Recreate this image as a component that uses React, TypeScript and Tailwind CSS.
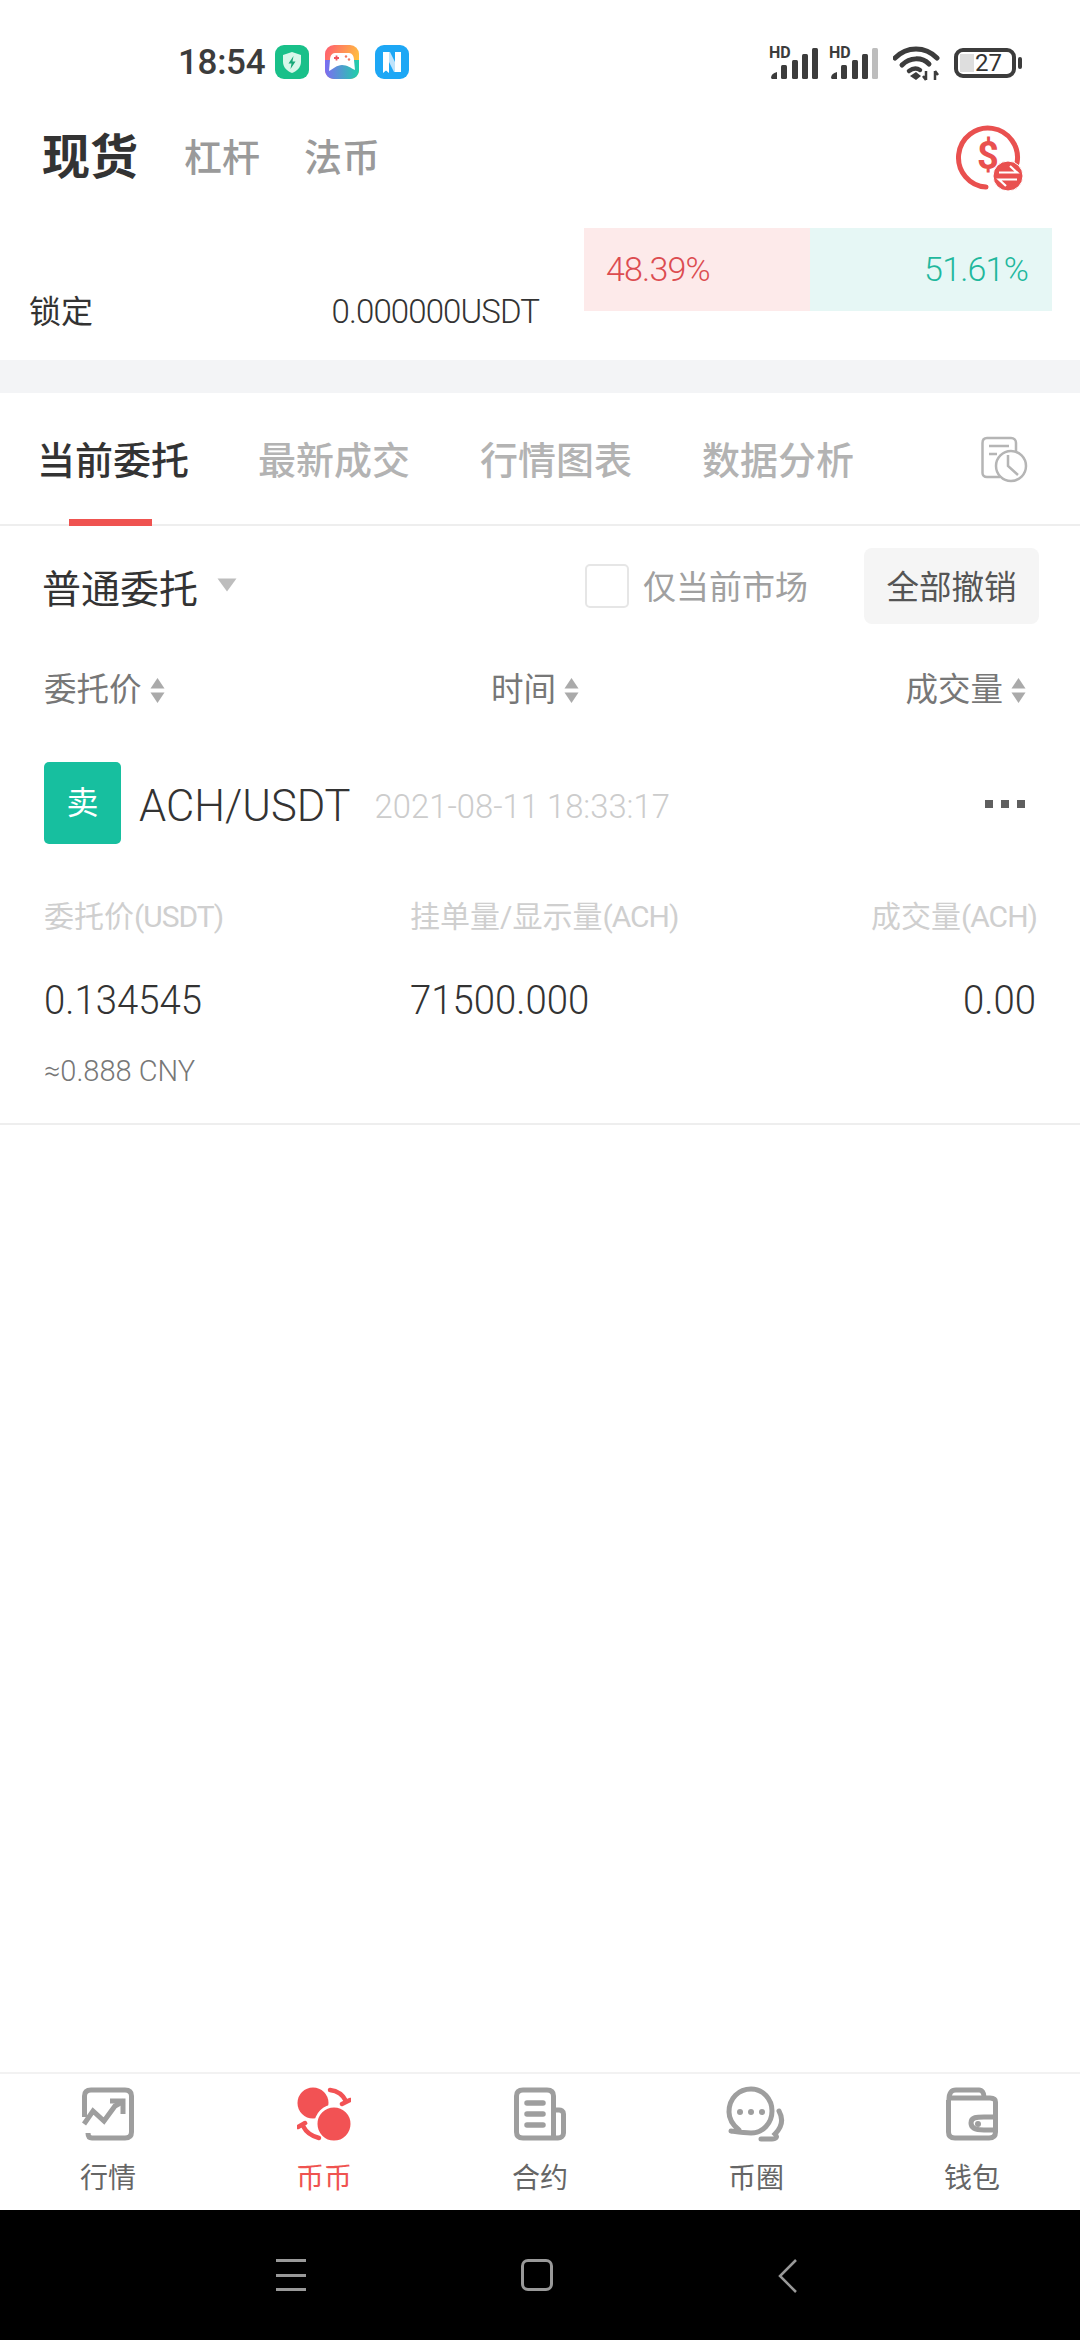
import React from "react";

const Signal = ({ lastGray }: { lastGray?: boolean }) => (
  <svg width="52" height="38" viewBox="0 -4 52 38" className="-mt-[5px]">
    <text x="0" y="12" fontSize="16" fontWeight="700" fill="#3c3c3c" fontFamily="Roboto">HD</text>
    <path d="M2 32C2 29 4 27 8 26V33H3Z" fill="#3c3c3c" />
    <rect x="12" y="19" width="6" height="14" rx="1.500" fill="#3c3c3c" />
    <rect x="23" y="14" width="6" height="19" rx="1.500" fill="#3c3c3c" />
    <rect x="33" y="8" width="6" height="25" rx="1.500" fill="#3c3c3c" />
    <rect x="43" y="2" width="6" height="31" rx="1.500" fill={lastGray ? "#bdbdbd" : "#3c3c3c"} />
  </svg>
);

const Wifi = () => (
  <svg width="48" height="36" viewBox="0 0 48 36" fill="none">
    <path d="M2 13C14 1 32 1 44 13" stroke="#3c3c3c" strokeWidth="5" strokeLinecap="round" />
    <path d="M9 20C17 12 29 12 36 19" stroke="#3c3c3c" strokeWidth="5" strokeLinecap="round" />
    <path d="M16 26C20 23 24 23 27 25" stroke="#3c3c3c" strokeWidth="4.500" strokeLinecap="round" />
    <path d="M17 31L23 27L28 31L23 35Z" fill="#3c3c3c" />
    <path d="M33 26V35M33 35L30 31M42 35V26M42 26L45 30" stroke="#3c3c3c" strokeWidth="2.500" />
  </svg>
);

const Battery = () => (
  <div className="flex items-center gap-[2px]">
    <div className="w-[62px] h-[30px] border-[4px] border-[#3c3c3c] rounded-[9px] flex items-center pl-[2px]">
      <div className="w-[14px] h-[18px] bg-[#dedede]" />
      <span className="text-[24px] leading-none text-[#333] ml-[1px]">27</span>
    </div>
    <div className="w-[4px] h-[12px] bg-[#3c3c3c] rounded-[2px]" />
  </div>
);

const AppGreen = () => (
  <svg width="34" height="34" viewBox="0 0 34 34">
    <rect width="34" height="34" rx="9" fill="#19c089" />
    <path d="M17 7L26 10V17C26 22 22 26 17 28C12 26 8 22 8 17V10Z" fill="#d9f7ea" />
    <path d="M18.500 11L13.500 18.500H16.500L15.500 24L20.500 16.500H17.500Z" fill="#19a878" />
  </svg>
);

const AppGame = () => (
  <svg width="34" height="34" viewBox="0 0 34 34">
    <defs>
      <linearGradient id="gg" x1="0" y1="0" x2="1" y2="0.4">
        <stop offset="0" stopColor="#ff5a72" />
        <stop offset="1" stopColor="#ffc13d" />
      </linearGradient>
      <linearGradient id="gb" x1="0" y1="0" x2="1" y2="0">
        <stop offset="0" stopColor="#7c6cf2" />
        <stop offset="1" stopColor="#1fd0a8" />
      </linearGradient>
    </defs>
    <rect width="34" height="34" rx="9" fill="url(#gg)" />
    <path d="M0 15H34V25C34 30 30 34 25 34H9C4 34 0 30 0 25Z" fill="url(#gb)" />
    <path d="M10 8H24C27 8 29 11 29 15L30 25C26 23 22 20 17 20C12 20 8 24 4 26L5 15C5 11 7 8 10 8Z" fill="#fff" />
    <path d="M9 13H14M11.500 10.500V15.500" stroke="#f0555f" strokeWidth="1.800" />
    <circle cx="21" cy="11.500" r="1.200" fill="#f0775f" />
    <circle cx="24" cy="14.500" r="1.200" fill="#f0775f" />
  </svg>
);

const AppN = () => (
  <svg width="34" height="34" viewBox="0 0 34 34">
    <rect width="34" height="34" rx="9" fill="#1da7f5" />
    <path d="M9 7H15L25 27H19Z" fill="#bfe3fb" />
    <path d="M8 7H14V28L11 25.500L8 28Z" fill="#fff" />
    <path d="M20 7H26V27H20Z" fill="#fff" />
  </svg>
);

const ExchangeIcon = () => (
  <svg width="72" height="72" viewBox="0 0 72 72" fill="none">
    <path d="M31 65A29.500 29.500 0 1 1 62 41" stroke="#e9504f" strokeWidth="5" strokeLinecap="round" />
    <text x="33" y="47" fontSize="38" fontWeight="700" fill="#e9504f" textAnchor="middle" fontFamily="Roboto">$</text>
    <circle cx="53" cy="54" r="15" fill="#e9504f" stroke="#fff" strokeWidth="1" />
    <path d="M44 50.500H62L55 44M62 57.500H44L51 64" stroke="#fff" strokeWidth="2.200" />
  </svg>
);

const HistoryIcon = () => (
  <svg width="48" height="48" viewBox="0 0 48 48" fill="none" stroke="#b5b5b5" strokeWidth="2.500">
    <path d="M20 42H7C4 42 2.500 40 2.500 38V8C2.500 5 4 3 7 3H31C34 3 36 5 36 8V18" />
    <path d="M9 11H29M9 19H17" />
    <circle cx="31" cy="31" r="15" />
    <path d="M28 20V31L38 40" />
  </svg>
);

const SortCaret = () => (
  <svg width="15" height="27" viewBox="0 0 15 27" className="ml-[8px]">
    <path d="M7.500 1L14.500 11.500H0.500Z" fill="#aaa" />
    <path d="M7.500 26L14.500 15.500H0.500Z" fill="#aaa" />
  </svg>
);

const navGray = "#9e9e9e";

const NavChart = () => (
  <svg width="52" height="54" viewBox="0 0 52 54" fill="none" stroke={navGray} strokeWidth="5">
    <path d="M2.500 30V9C2.500 5 5 3 9 3H43C47 3 49.500 5 49.500 9V45C49.500 49 47 51 43 51H10C7 51 6 49 6 46" />
    <path d="M2 37L11 24L22 34L33 19L42 14" strokeWidth="5" />
    <path d="M28 14H41V27" strokeWidth="5" />
  </svg>
);

const NavCoin = () => (
  <svg width="54" height="54" viewBox="0 0 54 54" fill="none">
    <circle cx="16" cy="16" r="15.500" fill="#f25254" />
    <circle cx="37" cy="37" r="18" fill="#f25254" stroke="#fff" strokeWidth="3" />
    <path d="M33 3C41 4 46 8 49 14" stroke="#f25254" strokeWidth="4.500" strokeLinecap="round" />
    <path d="M53 13L45 17" stroke="#f25254" strokeWidth="4.500" strokeLinecap="round" />
    <path d="M6 39C9 45 14 49 22 51" stroke="#f25254" strokeWidth="4.500" strokeLinecap="round" />
    <path d="M1 40L8 36" stroke="#f25254" strokeWidth="4.500" strokeLinecap="round" />
  </svg>
);

const NavPaper = () => (
  <svg width="52" height="54" viewBox="0 0 52 54" fill="none" stroke={navGray} strokeWidth="5">
    <path d="M40 51H9C5 51 2.500 49 2.500 45V9C2.500 5 5 3 9 3H33C37 3 39.500 5 39.500 9V51H44C47 51 49.500 49 49.500 46V27C49.500 24 47 23 45 23H40" />
    <path d="M13 16H29M13 27H29M13 38H29" strokeWidth="5.500" strokeLinecap="round" />
  </svg>
);

const NavChat = () => (
  <svg width="60" height="56" viewBox="0 0 60 56" fill="none" stroke={navGray} strokeWidth="5" strokeLinecap="round">
    <path d="M13 44C8 40 3 34 3 26C3 12 13 3 25 3C37 3 46 13 46 25C46 37 37 47 25 47C18 47 12 46 5 45" />
    <circle cx="14" cy="26" r="3" fill={navGray} stroke="none" />
    <circle cx="25" cy="26" r="3" fill={navGray} stroke="none" />
    <circle cx="36" cy="26" r="3" fill={navGray} stroke="none" />
    <path d="M53 25C58 34 56 41 49 48C52 51 50 53 46 53H35" />
  </svg>
);

const NavWallet = () => (
  <svg width="52" height="54" viewBox="0 0 52 54" fill="none" stroke={navGray} strokeWidth="5">
    <path d="M2.500 13V45C2.500 49 5 51 9 51H43C47 51 49.500 49 49.500 45V15C49.500 12 47 11 44 11H3" />
    <path d="M3 13C3 6 5 3 10 3H33C36 3 38 6 38 10" />
    <path d="M49 30H38C31 30 25 30 25 36C25 42 31 43 38 43H49" />
    <circle cx="32" cy="37" r="3" fill={navGray} stroke="none" />
  </svg>
);

const navItems = [
  { label: "行情", icon: <NavChart />, active: false },
  { label: "币币", icon: <NavCoin />, active: true },
  { label: "合约", icon: <NavPaper />, active: false },
  { label: "币圈", icon: <NavChat />, active: false },
  { label: "钱包", icon: <NavWallet />, active: false },
];

export default function App() {
  return (
    <div className="w-[1080px] h-[2340px] bg-white flex flex-col overflow-hidden font-['Roboto','Noto_Sans_CJK_SC',sans-serif]">
      {/* Status bar */}
      <div className="h-[100px] shrink-0 pt-[45px] pl-[178px] pr-[58px] flex justify-between items-start">
        <div className="flex items-center h-[34px]">
          <span className="text-[35px] leading-none font-medium text-[#3c3c3c] w-[97px] tracking-[-0.3px]">18:54</span>
          <div className="flex gap-[16px]">
            <AppGreen />
            <AppGame />
            <AppN />
          </div>
        </div>
        <div className="flex items-center gap-[8px]">
          <Signal />
          <Signal lastGray />
          <div className="ml-[4px] mr-[5px]">
            <Wifi />
          </div>
          <Battery />
        </div>
      </div>

      {/* Header */}
      <div className="h-[116px] shrink-0 mb-[12px] flex items-center pl-[42px] pr-[53px]">
        <span className="text-[48px] font-bold text-[#333] leading-none">现货</span>
        <span className="ml-[46px] text-[38px] font-medium text-[#9a9a9a] leading-none">杠杆</span>
        <span className="ml-[44px] text-[38px] font-medium text-[#9a9a9a] leading-none">法币</span>
        <div className="ml-auto">
          <ExchangeIcon />
        </div>
      </div>

      {/* Stats */}
      <div className="h-[132px] shrink-0 flex pl-[29px] pr-[28px]">
        <div className="w-[510px] h-[83px] flex justify-between items-end translate-y-[23px]">
          <span className="text-[32px] leading-[44px] text-[#333]">锁定</span>
          <span className="text-[33px] leading-[44px] text-[#333] tracking-[-0.9px] font-light">0.000000USDT</span>
        </div>
        <div className="ml-[45px] w-[468px] h-[83px] flex">
          <div className="w-[226px] bg-[#fdeaea] flex items-center pl-[22px] text-[34px] tracking-[-0.8px] font-light text-[#dc4c50]">48.39%</div>
          <div className="flex-1 bg-[#e6f7f5] flex items-center justify-end pr-[24px] text-[34px] tracking-[-0.8px] font-light text-[#1fb89d]">51.61%</div>
        </div>
      </div>

      <div className="h-[33px] shrink-0 bg-[#f3f4f6]" />

      {/* Tabs */}
      <div className="h-[133px] shrink-0 border-b-[2px] border-[#eeeeee] flex pl-[37px] pr-[52px] items-stretch">
        <div className="relative flex items-center pt-[5px] w-[151px]">
          <span className="text-[38px] font-medium text-[#333] leading-none whitespace-nowrap">当前委托</span>
          <div className="absolute bottom-[-2px] left-[32px] w-[83px] h-[7px] bg-[#ef5350]" />
        </div>
        <div className="flex items-center pt-[5px] ml-[70px] text-[38px] font-medium text-[#b3b3b3] leading-none whitespace-nowrap w-[152px]">最新成交</div>
        <div className="flex items-center pt-[5px] ml-[70px] text-[38px] font-medium text-[#b3b3b3] leading-none whitespace-nowrap w-[152px]">行情图表</div>
        <div className="flex items-center pt-[5px] ml-[70px] text-[38px] font-medium text-[#b3b3b3] leading-none whitespace-nowrap w-[152px]">数据分析</div>
        <div className="ml-auto flex items-center">
          <HistoryIcon />
        </div>
      </div>

      {/* Filter */}
      <div className="shrink-0 h-[76px] mt-[22px] pl-[42px] pr-[41px] flex items-center">
        <span className="text-[39px] leading-none text-[#333] translate-y-[4px]">普通委托</span>
        <svg width="20" height="14" viewBox="0 0 20 14" className="ml-[19px] -mt-[3px]">
          <path d="M0.500 0.500H19.500L10 13.500Z" fill="#bdbdbd" />
        </svg>
        <div className="ml-auto w-[44px] h-[44px] border-[2px] border-[#e6e6e6] rounded-[5px]" />
        <span className="ml-[14px] text-[33px] leading-none text-[#a0a0a0] translate-y-[1px]">仅当前市场</span>
        <div className="ml-[56px] w-[175px] h-[76px] bg-[#f5f5f5] rounded-[8px] flex items-center justify-center text-[32.500px] text-[#555] leading-none pt-[5px]">全部撤销</div>
      </div>

      {/* Column headers */}
      <div className="shrink-0 mt-[48px] h-[36px] pl-[44px] pr-[54px] flex items-center justify-between">
        <div className="flex items-center w-[447px]">
          <span className="text-[32.500px] leading-none text-[#777]">委托价</span>
          <SortCaret />
        </div>
        <div className="flex items-center flex-1">
          <span className="text-[32.500px] leading-none text-[#777]">时间</span>
          <SortCaret />
        </div>
        <div className="flex items-center">
          <span className="text-[32.500px] leading-none text-[#777]">成交量</span>
          <SortCaret />
        </div>
      </div>

      {/* Order */}
      <div className="shrink-0 mt-[54px] pl-[44px] pr-[55px] flex items-center h-[82px]">
        <div className="w-[77px] h-[82px] bg-[#17bf9f] rounded-[5px] flex items-center justify-center text-white text-[32px] leading-none">卖</div>
        <span className="ml-[18px] text-[43.500px] leading-none text-[#333] font-light translate-y-[4px]">ACH/USDT</span>
        <span className="ml-[24px] text-[32.800px] leading-none text-[#cccccc] font-light translate-y-[4px]">2021-08-11 18:33:17</span>
        <div className="ml-auto flex gap-[8px] translate-y-[1px]">
          <div className="w-[8px] h-[8px] bg-[#5f5f5f]" />
          <div className="w-[8px] h-[8px] bg-[#5f5f5f]" />
          <div className="w-[8px] h-[8px] bg-[#5f5f5f]" />
        </div>
      </div>

      <div className="shrink-0 mt-[55px] pl-[44px] pr-[43px] flex h-[36px] items-center text-[30px] leading-none text-[#cfcfcf]">
        <span className="w-[366px]">委托价<span className="tracking-[-1px]">(USDT)</span></span>
        <span className="flex-1">挂单量/显示量<span className="tracking-[-1px]">(ACH)</span></span>
        <span>成交量<span className="tracking-[-1px]">(ACH)</span></span>
      </div>

      <div className="shrink-0 mt-[45px] pl-[44px] pr-[44px] flex h-[40px] items-center text-[41px] leading-none font-light text-[#333]">
        <span className="w-[366px] origin-left scale-x-[0.935]">0.134545</span>
        <span className="flex-1 origin-left scale-x-[0.935]">71500.000</span>
        <span className="origin-right scale-x-[0.935]">0.00</span>
      </div>

      <div className="shrink-0 mt-[33px] pl-[44px] h-[36px] flex items-center text-[29px] leading-none font-light text-[#777]">≈0.888 CNY</div>

      <div className="shrink-0 mt-[34px] h-[2px] bg-[#eeeeee]" />

      <div className="flex-1" />

      {/* Bottom nav */}
      <div className="shrink-0 h-[138px] border-t-[2px] border-[#f2f2f2] flex">
        {navItems.map((item) => (
          <div key={item.label} className="w-[216px] flex flex-col items-center pt-[13px]">
            <div className="h-[54px] flex items-center justify-center">{item.icon}</div>
            <span className={`mt-[22px] text-[28px] leading-[32px] ${item.active ? "text-[#ef5350]" : "text-[#666]"}`}>{item.label}</span>
          </div>
        ))}
      </div>

      {/* System nav */}
      <div className="shrink-0 h-[130px] bg-black flex items-start pt-[49px] pl-[276px]">
        <div className="w-[30px] h-[32px] flex flex-col justify-between">
          <div className="h-[3px] bg-[#999]" />
          <div className="h-[3px] bg-[#999]" />
          <div className="h-[3px] bg-[#999]" />
        </div>
        <div className="ml-[215px] w-[32px] h-[32px] border-[3px] border-[#999] rounded-[7px]" />
        <svg width="20" height="34" viewBox="0 0 20 34" className="ml-[225px]" fill="none">
          <path d="M18 1L2 17L18 33" stroke="#999" strokeWidth="2.500" />
        </svg>
      </div>
    </div>
  );
}
